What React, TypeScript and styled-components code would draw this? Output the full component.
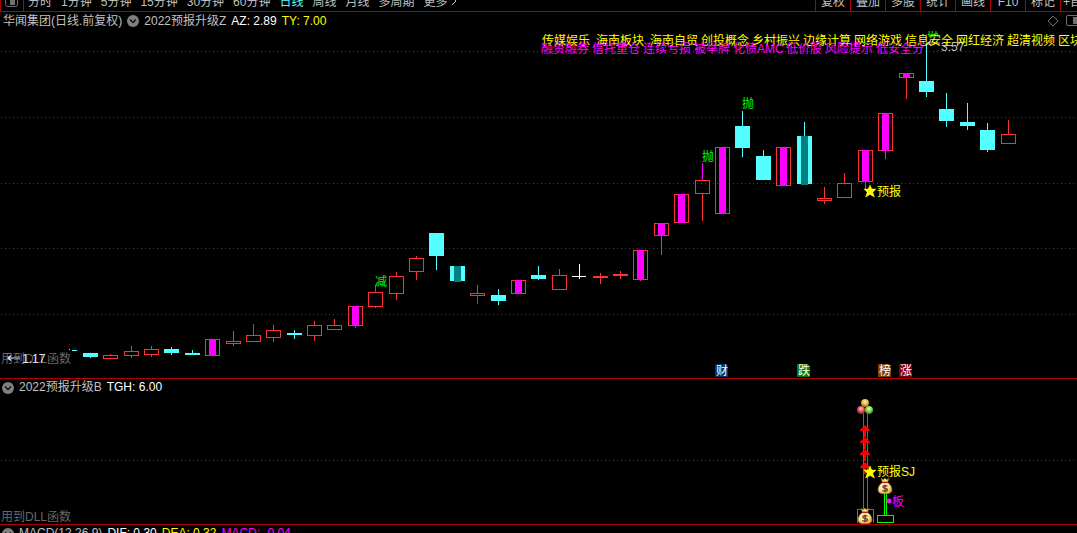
import React from "react";
import styled, { createGlobalStyle } from "styled-components";

const GlobalStyle = createGlobalStyle`
  * { box-sizing: border-box; }
  html, body { margin: 0; background: #000; }
  body, button {
    font-family: "Liberation Sans", "Noto Sans CJK SC", sans-serif;
    font-size: 12px;
  }
`;

const RED_LINE = "#b00000";
const UP = "#ff3232";
const DOWN = "#54ffff";
const MAGENTA = "#ff00ff";
const TEAL = "#008080";
const YELLOW = "#ffff00";
const GREEN = "#00ff00";
const TEXT = "#c0c0c0";

const Page = styled.main`
  display: flex;
  flex-direction: column;
  height: 100vh;
  overflow: hidden;
  background: #000;
  color: ${TEXT};
`;

const Toolbar = styled.nav`
  display: flex;
  flex: none;
  align-items: flex-end;
  height: 12px;
  overflow: hidden;
  border-bottom: 1px solid ${RED_LINE};
`;

const LayoutButton = styled.button`
  display: flex;
  align-items: flex-end;
  width: 24px;
  height: 18px;
  padding: 0 0 4px 4px;
  border: solid ${RED_LINE};
  border-width: 0 1px;
  background: none;
`;

const Periods = styled.div`
  display: flex;
  gap: 9px;
  padding-left: 4px;
`;

const PeriodButton = styled.button<{ $active?: boolean }>`
  height: 18px;
  padding: 0;
  border: 0;
  background: none;
  color: ${(p) => (p.$active ? DOWN : TEXT)};
  line-height: 18px;
  white-space: nowrap;
`;

const Tools = styled.div`
  display: flex;
  margin-left: auto;
`;

const ToolButton = styled.button<{ $cut?: boolean }>`
  width: ${(p) => (p.$cut ? 17 : 35)}px;
  height: 18px;
  padding: 0;
  padding-left: ${(p) => (p.$cut ? 2 : 0)}px;
  overflow: hidden;
  border: 0;
  border-left: 1px solid ${RED_LINE};
  background: none;
  color: ${TEXT};
  line-height: 18px;
  text-align: ${(p) => (p.$cut ? "left" : "center")};
  white-space: nowrap;
`;

const Panel = styled.section`
  flex: none;
  border-bottom: 1px solid ${RED_LINE};
`;

const PanelHeader = styled.header<{ $tall?: boolean }>`
  display: flex;
  align-items: center;
  gap: 5px;
  height: ${(p) => (p.$tall ? 18 : 17)}px;
  padding-left: ${(p) => (p.$tall ? 3 : 2)}px;
  line-height: 17px;
  white-space: nowrap;
`;

const Label = styled.span<{ $color?: string }>`
  color: ${(p) => p.$color ?? TEXT};
`;

const IconButton = styled.button`
  display: flex;
  padding: 0;
  border: 0;
  background: none;
`;

const HeaderActions = styled.div`
  display: flex;
  align-items: center;
  gap: 7px;
  margin-left: auto;
`;

const Plot = styled.svg<{ $height: number }>`
  display: block;
  width: 100%;
  height: ${(p) => p.$height}px;
  font-size: 12px;
`;

const Collapse = () => (
  <IconButton aria-label="指标菜单">
    <svg width="12" height="12" viewBox="0 0 12 12">
      <circle cx="6" cy="6" r="6" fill="#808080" />
      <path d="M3 4.5l3 3 3-3" fill="none" stroke="#101010" strokeWidth="1.5" />
    </svg>
  </IconButton>
);

const periods = ["分时", "1分钟", "5分钟", "15分钟", "30分钟", "60分钟", "日线", "周线", "月线", "多周期"];
const tools = ["复权", "叠加", "多股", "统计", "画线", "F10", "标记"];

type Kind = "up" | "down" | "strong" | "weak" | "flat";

interface Candle {
  x: number;
  top: number;
  bottom: number;
  high: number;
  low: number;
  kind: Kind;
  highColor?: string;
  lowColor?: string;
}

const c = (
  x: number,
  kind: Kind,
  top: number,
  bottom: number,
  high = top,
  low = bottom,
  highColor?: string,
  lowColor?: string
): Candle => ({ x, kind, top, bottom, high, low, highColor, lowColor });

const candles: Candle[] = [
  c(83, "down", 353, 357, 353, 358),
  c(103, "up", 355, 359, 354),
  c(124, "up", 351, 356, 346, 358),
  c(144, "up", 349, 355, 346, 357),
  c(164, "down", 349, 353, 347, 355),
  c(185, "down", 353, 355, 350),
  c(205, "strong", 339, 356),
  c(226, "up", 341, 344, 331, 346),
  c(246, "up", 335, 342, 324, 342, MAGENTA),
  c(266, "up", 330, 338, 325, 342),
  c(287, "down", 333, 335, 330, 339),
  c(307, "up", 325, 336, 321, 341),
  c(327, "up", 325, 330, 319),
  c(348, "strong", 306, 326, 306, 328),
  c(368, "up", 292, 307, 285, 308, MAGENTA),
  c(389, "up", 276, 294, 272, 300),
  c(409, "up", 258, 272, 256, 280),
  c(429, "down", 233, 256, 233, 270),
  c(450, "weak", 266, 281),
  c(470, "up", 293, 296, 285, 304, undefined, TEAL),
  c(491, "down", 295, 301, 289, 305),
  c(511, "strong", 280, 294),
  c(531, "down", 275, 279, 266, 280),
  c(552, "up", 275, 290, 269),
  c(572, "flat", 276, 277, 264, 279),
  c(593, "up", 276, 278, 273, 284),
  c(613, "up", 274, 276, 271, 279),
  c(633, "strong", 250, 280, 250, 281),
  c(654, "strong", 223, 236, 223, 255),
  c(674, "strong", 194, 223),
  c(695, "up", 180, 194, 163, 221, MAGENTA),
  c(715, "strong", 147, 214),
  c(735, "down", 126, 148, 111, 157),
  c(756, "down", 156, 180, 150),
  c(776, "strong", 147, 186),
  c(797, "weak", 136, 184, 122),
  c(817, "up", 198, 201, 187, 204),
  c(837, "up", 183, 198, 173),
  c(858, "strong", 150, 182, 150, 190),
  c(878, "strong", 113, 151, 113, 159),
  c(899, "strong", 73, 78, 73, 99),
  c(919, "down", 81, 92, 43, 97),
  c(939, "down", 109, 121, 93, 127),
  c(960, "down", 122, 126, 103, 130),
  c(980, "down", 130, 150, 123, 152),
  c(1001, "up", 134, 144, 120),
];

const CandleShape = ({ d }: { d: Candle }) => {
  const hollow = d.kind === "up" || d.kind === "strong";
  const color = d.kind === "flat" ? "#fff" : hollow ? UP : DOWN;
  return (
    <g shapeRendering="crispEdges">
      {d.high < d.top && <rect x={d.x + 7} y={d.high} width="1" height={d.top - d.high} fill={d.highColor ?? color} />}
      {d.low > d.bottom && <rect x={d.x + 7} y={d.bottom} width="1" height={d.low - d.bottom} fill={d.lowColor ?? color} />}
      {hollow ? (
        <rect x={d.x + 0.5} y={d.top + 0.5} width="14" height={d.bottom - d.top - 1} fill="none" stroke={color} />
      ) : (
        <rect x={d.x} y={d.top} width={d.kind === "flat" ? 14 : 15} height={d.bottom - d.top} fill={color} />
      )}
      {d.kind === "strong" && <rect x={d.x + 4} y={d.top} width="7" height={d.bottom - d.top} fill={MAGENTA} />}
      {d.kind === "weak" && <rect x={d.x + 4} y={d.top} width="7" height={d.bottom - d.top + 1} fill={TEAL} />}
    </g>
  );
};

const GridLine = ({ y }: { y: number }) => (
  <line x1="1" x2="100%" y1={y + 0.5} y2={y + 0.5} stroke="#b01010" strokeDasharray="1 3" shapeRendering="crispEdges" />
);

const concepts = ["传媒娱乐", "海南板块", "海南自贸", "创投概念", "乡村振兴", "边缘计算", "网络游戏", "信息安全", "网红经济", "超清视频", "区块链"];

const styles = [
  { x: 541, text: "融资融券" },
  { x: 592, text: "信托重仓" },
  { x: 643, text: "连续亏损" },
  { x: 694, text: "被举牌" },
  { x: 733, text: "化债AMC" },
  { x: 786, text: "低价股" },
  { x: 825, text: "风险提示" },
  { x: 876, text: "低安全分" },
];

const tags = [
  { x: 715, text: "财", fill: "#003366" },
  { x: 797, text: "跌", fill: "#008000" },
  { x: 878, text: "榜", fill: "#804000" },
  { x: 899, text: "涨", fill: "#800000" },
];

const Star = ({ x, y }: { x: number; y: number }) => (
  <path
    transform={`translate(${x} ${y})`}
    d="M0-6L1.8-2H6L2.8 1.2 4.4 6 0 3.4-4.4 6-2.8 1.2-6-2H-1.8Z"
    fill={YELLOW}
    stroke={YELLOW}
    strokeWidth=".5"
  />
);

const LeftArrow = ({ x, y, color }: { x: number; y: number; color: string }) => (
  <path d={`M${x + 12} ${y}H${x}M${x + 3} ${y - 2.5}L${x} ${y}L${x + 3} ${y + 2.5}`} fill="none" stroke={color} strokeWidth="1.2" />
);

const MoneyBag = ({ x, y }: { x: number; y: number }) => (
  <g transform={`translate(${x} ${y})`}>
    <path d="M-4-7.6L-1.5-6.4 0-8 1.5-6.4 4-7.6 2.6-3.6H-2.6Z" fill="#f4dc80" stroke="#8a5a18" strokeWidth=".7" />
    <path d="M-2.6-3.4C-5.4-1.6-7.2 1.6-6.8 4.6-6.3 7.4-3.6 7.8 0 7.8S6.3 7.4 6.8 4.6C7.2 1.6 5.4-1.6 2.6-3.4Z" fill="url(#bag)" stroke="#c09030" strokeWidth=".6" />
    <path d="M-3-3.6H3" stroke="#b02818" strokeWidth="1.3" />
    <path d="M2.4.4C1.4-.6-2.2-.8-2.2 1S2.5 2.1 2.5 3.8-1.5 5.6-2.6 4.3M0-1.2V6.2" fill="none" stroke="#6a2c1c" strokeWidth="1.2" />
  </g>
);

const App = () => (
  <Page>
    <GlobalStyle />
    <Toolbar>
      <LayoutButton aria-label="布局">
        <svg width="13" height="12" viewBox="0 0 13 12">
          <rect x=".5" y=".5" width="12" height="11" rx="2" fill="none" stroke="#707070" />
          <rect x="5" y="3" width="5" height="7" fill="#707070" />
        </svg>
      </LayoutButton>
      <Periods>
        {periods.map((p) => (
          <PeriodButton key={p} $active={p === "日线"}>{p}</PeriodButton>
        ))}
        <PeriodButton>
          更多{" "}
          <svg width="6" height="9" viewBox="0 0 6 9">
            <path d="M1 0l4 4-4 4" fill="none" stroke={TEXT} />
          </svg>
        </PeriodButton>
      </Periods>
      <Tools>
        {tools.map((t) => (
          <ToolButton key={t}>{t}</ToolButton>
        ))}
        <ToolButton $cut>+自选</ToolButton>
      </Tools>
    </Toolbar>

    <Panel>
      <PanelHeader $tall>
        <Label>华闻集团(日线.前复权)</Label>
        <Collapse />
        <Label>2022预报升级Z</Label>
        <Label $color="#fff">AZ: 2.89</Label>
        <Label $color={YELLOW}>TY: 7.00</Label>
        <HeaderActions>
          <IconButton aria-label="标记点">
            <svg width="12" height="12" viewBox="0 0 12 12">
              <path d="M6 1l5 5-5 5-5-5z" fill="none" stroke="#707070" />
            </svg>
          </IconButton>
          <IconButton aria-label="侧栏">
            <svg width="11" height="12" viewBox="0 0 11 12">
              <rect x=".5" y=".5" width="16" height="10" rx="1.5" fill="none" stroke="#707070" />
              <rect x="7" y="2" width="6" height="7" fill="#707070" />
            </svg>
          </IconButton>
        </HeaderActions>
      </PanelHeader>
      <Plot $height={348} role="img" aria-label="日线K线图">
        <defs>
          <clipPath id="signalTop">
            <rect x="920" y="30" width="24" height="7" />
          </clipPath>
        </defs>
        <g transform="translate(0 -30)">
          {[51, 117, 183, 248, 314].map((y) => <GridLine key={y} y={y} />)}
          <rect x="69" y="349" width="1" height="1" fill={DOWN} />
          <rect x="72" y="350" width="5" height="1" fill={DOWN} />
          {candles.map((d) => <CandleShape key={d.x} d={d} />)}

          <g fill={GREEN}>
            <text x="375" y="286">减</text>
            <text x="702" y="161">抛</text>
            <text x="742" y="108">抛</text>
            <text x="927" y="42" clipPath="url(#signalTop)">抛</text>
          </g>

          <LeftArrow x={928} y={43} color={TEXT} />
          <text x="941" y="51" fill={TEXT}>3.57</text>
          <g fill={YELLOW}>
            {concepts.map((name, i) => (
              <text key={name} x={542 + i * 51 + Math.min(i, 2) * 3} y="45">{name}</text>
            ))}
          </g>
          <g fill={MAGENTA}>
            {styles.map((s) => (
              <text key={s.text} x={s.x} y="53">{s.text}</text>
            ))}
          </g>

          <Star x={870} y={191} />
          <text x="877" y="196" fill={YELLOW}>预报</text>

          <text x="1" y="363" fill="#696969">用到DLL函数</text>
          <LeftArrow x={8} y={358} color="#e0e0e0" />
          <text x="22" y="363" fill="#e0e0e0">1.17</text>

          {tags.map((t) => (
            <g key={t.text}>
              <path d={`M${t.x} 364h11l2 2v11h-13z`} fill={t.fill} />
              <text x={t.x + 1} y="375" fill="#fff">{t.text}</text>
            </g>
          ))}
        </g>
      </Plot>
    </Panel>

    <Panel>
      <PanelHeader>
        <Collapse />
        <Label>2022预报升级B</Label>
        <Label $color="#fff">TGH: 6.00</Label>
      </PanelHeader>
      <Plot $height={128} role="img" aria-label="预报信号图">
        <defs>
          <radialGradient id="bag" cx=".4" cy=".35" r=".7">
            <stop offset="0" stopColor="#fffbe0" />
            <stop offset=".6" stopColor="#f8e08c" />
            <stop offset="1" stopColor="#d8a030" />
          </radialGradient>
          {[
            ["gold", "#fff4b8", "#d8b040", "#8a6a18"],
            ["red", "#ffc8c0", "#d84848", "#902020"],
            ["green", "#e4ffc8", "#6cd040", "#388018"],
          ].map(([id, a, b, e]) => (
            <radialGradient key={id} id={id} cx=".5" cy=".35" r=".65">
              <stop offset="0" stopColor={a} />
              <stop offset=".6" stopColor={b} />
              <stop offset="1" stopColor={e} />
            </radialGradient>
          ))}
        </defs>
        <g transform="translate(0 -396)">
          <GridLine y={460} />
          <g fill="none" stroke={MAGENTA} shapeRendering="crispEdges">
            <path d="M863.5 413V510M867.5 413V510" />
            <path d="M857.5 522.5V509.5H873.5V522.5" />
          </g>
          <circle cx="865" cy="403" r="4" fill="url(#gold)" />
          <circle cx="861" cy="410" r="4" fill="url(#red)" />
          <circle cx="869" cy="410" r="4" fill="url(#green)" />
          {[425, 437, 449, 462].map((y) => (
            <path key={y} d={`M865 ${y}l5 5v1h-4v6h-2v-6h-4v-1z`} fill="#ff0000" />
          ))}
          <MoneyBag x={865} y={516} />
          <g fill="none" stroke={GREEN} shapeRendering="crispEdges">
            <path d="M884.5 493V515M886.5 493V515" />
            <rect x="877.5" y="515.5" width="16" height="7" />
          </g>
          <MoneyBag x={885} y={486} />
          <Star x={870} y={472} />
          <text x="877" y="476" fill={YELLOW}>预报SJ</text>
          <circle cx="889" cy="501" r="2.5" fill={MAGENTA} />
          <text x="892" y="506" fill={MAGENTA}>板</text>
          <text x="1" y="521" fill="#696969">用到DLL函数</text>
        </g>
      </Plot>
    </Panel>

    <Panel>
      <PanelHeader>
        <Collapse />
        <Label>MACD(12,26,9)</Label>
        <Label $color="#fff">DIF: 0.30</Label>
        <Label $color={YELLOW}>DEA: 0.32</Label>
        <Label $color={MAGENTA}>MACD: -0.04</Label>
      </PanelHeader>
    </Panel>
  </Page>
);

export default App;
